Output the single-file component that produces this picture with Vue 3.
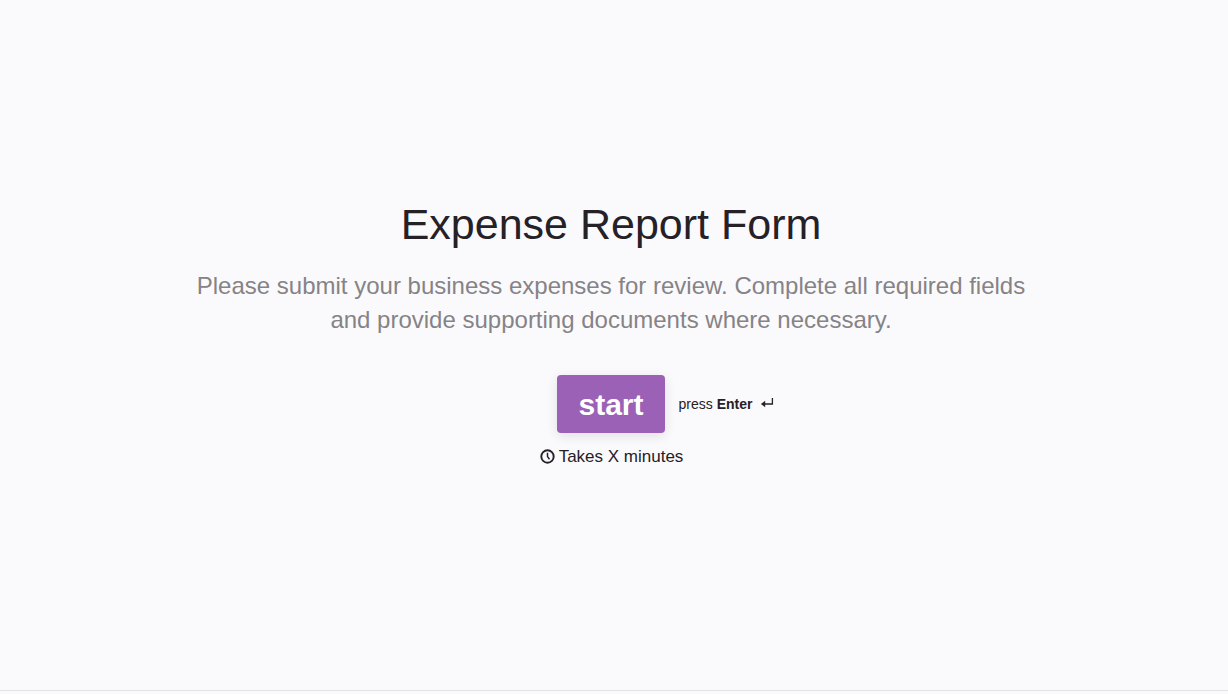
<script setup>
const title = 'Expense Report Form'
const minutes = 'X'
</script>

<template>
  <div class="page">
    <main class="welcome">
      <h1>{{ title }}</h1>
      <p class="description">Please submit your business expenses for review. Complete all required fields and provide supporting documents where necessary.</p>
      <div class="actions">
        <button type="button">start</button>
        <span class="hint">
          <span>press <strong>Enter</strong></span>
          <svg width="14" height="14" viewBox="0 0 14 14" aria-hidden="true"><path d="M12.4 1v6H4" fill="none" stroke="currentColor" stroke-width="1.3" /><path d="M.8 7l4.4-3.2v6.4z" fill="currentColor" /></svg>
        </span>
      </div>
      <div class="duration">
        <svg width="16" height="16" viewBox="0 0 16 16" aria-hidden="true"><circle cx="8.5" cy="7.5" r="6.2" fill="none" stroke="currentColor" stroke-width="1.9" /><path d="M8.5 3.8v3.8l2 2.6" fill="none" stroke="currentColor" stroke-width="1.5" /></svg>
        <span>Takes {{ minutes }} minutes</span>
      </div>
    </main>
    <footer class="edge"></footer>
  </div>
</template>

<style>
body { background: #fafafc; }
</style>

<style scoped>
.page {
  min-height: 100vh;
  display: flex;
  flex-direction: column;
  color: #262027;
  font-family: "Liberation Sans", Arial, sans-serif;
}
.welcome {
  flex: 1;
  display: flex;
  flex-direction: column;
  align-items: center;
  justify-content: center;
  padding: 0 190px 26px 184px;
}
h1 { margin: 0; font-size: 43px; line-height: 54px; font-weight: 400; }
.description { margin: 18px 0 0; max-width: 860px; font-size: 24px; line-height: 34px; text-align: center; color: #868387; }
.actions {
  display: grid;
  grid-template-columns: 1fr auto 1fr;
  align-items: center;
  column-gap: 14px;
  align-self: stretch;
  margin-top: 38px;
}
button {
  grid-column: 2;
  padding: 2px 21px 0;
  height: 58px;
  border: 0;
  border-radius: 4px;
  background: #9b61b6;
  color: #fff;
  font: 700 30px/56px "Liberation Sans", Arial, sans-serif;
  box-shadow: 0 3px 12px rgba(0, 0, 0, 0.1);
  cursor: pointer;
}
.hint { display: flex; align-items: center; gap: 8px; font-size: 14px; line-height: 20px; }
.duration { display: flex; align-items: center; gap: 4px; margin-top: 14px; font-size: 17px; line-height: 20px; }
.edge { height: 3px; border-top: 1px solid #e2e2e4; }
</style>
